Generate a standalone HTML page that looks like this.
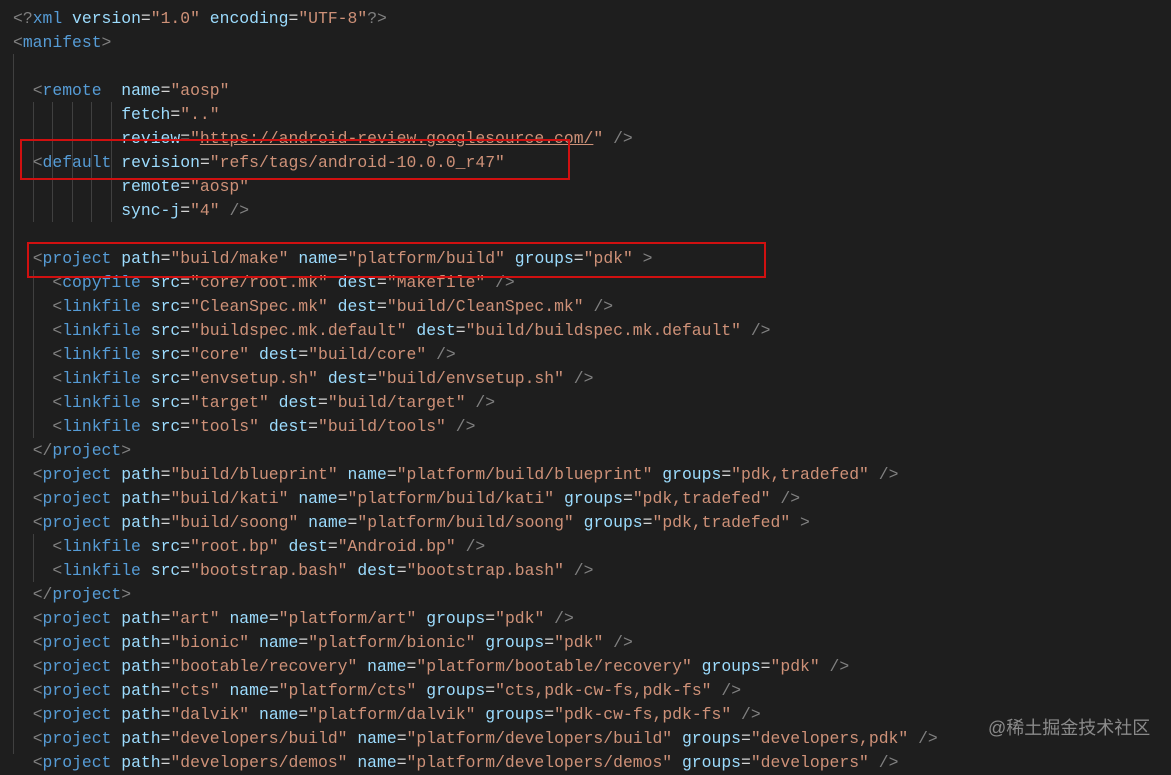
<!DOCTYPE html>
<html><head><meta charset="utf-8"><style>
html,body{margin:0;padding:0;background:#1e1e1e;width:1171px;height:759px;overflow:hidden}
#c{position:absolute;left:13px;top:7px;font-family:"Liberation Mono",monospace;font-size:16.4px;line-height:24px;color:#d4d4d4;white-space:pre}
.t{color:#569cd6}.b{color:#808080}.a{color:#9cdcfe}.s{color:#ce9178}.u{text-decoration:underline}
.g{position:absolute;width:1px;background:#404040}
.r{position:absolute;border:2px solid #d01010}
#w{position:absolute;left:988px;top:714px;font-family:"Liberation Sans","Noto Sans CJK SC",sans-serif;font-size:18px;color:#8a8a8a}
</style></head><body>
<div class="g" style="left:13px;top:54px;height:700px"></div>
<div class="g" style="left:33px;top:102px;height:120px"></div>
<div class="g" style="left:52px;top:102px;height:120px"></div>
<div class="g" style="left:72px;top:102px;height:120px"></div>
<div class="g" style="left:91px;top:102px;height:120px"></div>
<div class="g" style="left:111px;top:102px;height:120px"></div>
<div class="g" style="left:33px;top:270px;height:168px"></div>
<div class="g" style="left:33px;top:534px;height:48px"></div>
<div id="c"><span class="b">&lt;?</span><span class="t">xml</span> <span class="a">version</span>=<span class="s">"1.0"</span> <span class="a">encoding</span>=<span class="s">"UTF-8"</span><span class="b">?&gt;</span>
<span class="b">&lt;</span><span class="t">manifest</span><span class="b">&gt;</span>

  <span class="b">&lt;</span><span class="t">remote</span>  <span class="a">name</span>=<span class="s">"aosp"</span>
           <span class="a">fetch</span>=<span class="s">".."</span>
           <span class="a">review</span>=<span class="s">"<span class="u">https://android-review.googlesource.com/</span>"</span> <span class="b">/&gt;</span>
  <span class="b">&lt;</span><span class="t">default</span> <span class="a">revision</span>=<span class="s">"refs/tags/android-10.0.0_r47"</span>
           <span class="a">remote</span>=<span class="s">"aosp"</span>
           <span class="a">sync-j</span>=<span class="s">"4"</span> <span class="b">/&gt;</span>

  <span class="b">&lt;</span><span class="t">project</span> <span class="a">path</span>=<span class="s">"build/make"</span> <span class="a">name</span>=<span class="s">"platform/build"</span> <span class="a">groups</span>=<span class="s">"pdk"</span> <span class="b">&gt;</span>
    <span class="b">&lt;</span><span class="t">copyfile</span> <span class="a">src</span>=<span class="s">"core/root.mk"</span> <span class="a">dest</span>=<span class="s">"Makefile"</span> <span class="b">/&gt;</span>
    <span class="b">&lt;</span><span class="t">linkfile</span> <span class="a">src</span>=<span class="s">"CleanSpec.mk"</span> <span class="a">dest</span>=<span class="s">"build/CleanSpec.mk"</span> <span class="b">/&gt;</span>
    <span class="b">&lt;</span><span class="t">linkfile</span> <span class="a">src</span>=<span class="s">"buildspec.mk.default"</span> <span class="a">dest</span>=<span class="s">"build/buildspec.mk.default"</span> <span class="b">/&gt;</span>
    <span class="b">&lt;</span><span class="t">linkfile</span> <span class="a">src</span>=<span class="s">"core"</span> <span class="a">dest</span>=<span class="s">"build/core"</span> <span class="b">/&gt;</span>
    <span class="b">&lt;</span><span class="t">linkfile</span> <span class="a">src</span>=<span class="s">"envsetup.sh"</span> <span class="a">dest</span>=<span class="s">"build/envsetup.sh"</span> <span class="b">/&gt;</span>
    <span class="b">&lt;</span><span class="t">linkfile</span> <span class="a">src</span>=<span class="s">"target"</span> <span class="a">dest</span>=<span class="s">"build/target"</span> <span class="b">/&gt;</span>
    <span class="b">&lt;</span><span class="t">linkfile</span> <span class="a">src</span>=<span class="s">"tools"</span> <span class="a">dest</span>=<span class="s">"build/tools"</span> <span class="b">/&gt;</span>
  <span class="b">&lt;/</span><span class="t">project</span><span class="b">&gt;</span>
  <span class="b">&lt;</span><span class="t">project</span> <span class="a">path</span>=<span class="s">"build/blueprint"</span> <span class="a">name</span>=<span class="s">"platform/build/blueprint"</span> <span class="a">groups</span>=<span class="s">"pdk,tradefed"</span> <span class="b">/&gt;</span>
  <span class="b">&lt;</span><span class="t">project</span> <span class="a">path</span>=<span class="s">"build/kati"</span> <span class="a">name</span>=<span class="s">"platform/build/kati"</span> <span class="a">groups</span>=<span class="s">"pdk,tradefed"</span> <span class="b">/&gt;</span>
  <span class="b">&lt;</span><span class="t">project</span> <span class="a">path</span>=<span class="s">"build/soong"</span> <span class="a">name</span>=<span class="s">"platform/build/soong"</span> <span class="a">groups</span>=<span class="s">"pdk,tradefed"</span> <span class="b">&gt;</span>
    <span class="b">&lt;</span><span class="t">linkfile</span> <span class="a">src</span>=<span class="s">"root.bp"</span> <span class="a">dest</span>=<span class="s">"Android.bp"</span> <span class="b">/&gt;</span>
    <span class="b">&lt;</span><span class="t">linkfile</span> <span class="a">src</span>=<span class="s">"bootstrap.bash"</span> <span class="a">dest</span>=<span class="s">"bootstrap.bash"</span> <span class="b">/&gt;</span>
  <span class="b">&lt;/</span><span class="t">project</span><span class="b">&gt;</span>
  <span class="b">&lt;</span><span class="t">project</span> <span class="a">path</span>=<span class="s">"art"</span> <span class="a">name</span>=<span class="s">"platform/art"</span> <span class="a">groups</span>=<span class="s">"pdk"</span> <span class="b">/&gt;</span>
  <span class="b">&lt;</span><span class="t">project</span> <span class="a">path</span>=<span class="s">"bionic"</span> <span class="a">name</span>=<span class="s">"platform/bionic"</span> <span class="a">groups</span>=<span class="s">"pdk"</span> <span class="b">/&gt;</span>
  <span class="b">&lt;</span><span class="t">project</span> <span class="a">path</span>=<span class="s">"bootable/recovery"</span> <span class="a">name</span>=<span class="s">"platform/bootable/recovery"</span> <span class="a">groups</span>=<span class="s">"pdk"</span> <span class="b">/&gt;</span>
  <span class="b">&lt;</span><span class="t">project</span> <span class="a">path</span>=<span class="s">"cts"</span> <span class="a">name</span>=<span class="s">"platform/cts"</span> <span class="a">groups</span>=<span class="s">"cts,pdk-cw-fs,pdk-fs"</span> <span class="b">/&gt;</span>
  <span class="b">&lt;</span><span class="t">project</span> <span class="a">path</span>=<span class="s">"dalvik"</span> <span class="a">name</span>=<span class="s">"platform/dalvik"</span> <span class="a">groups</span>=<span class="s">"pdk-cw-fs,pdk-fs"</span> <span class="b">/&gt;</span>
  <span class="b">&lt;</span><span class="t">project</span> <span class="a">path</span>=<span class="s">"developers/build"</span> <span class="a">name</span>=<span class="s">"platform/developers/build"</span> <span class="a">groups</span>=<span class="s">"developers,pdk"</span> <span class="b">/&gt;</span>
  <span class="b">&lt;</span><span class="t">project</span> <span class="a">path</span>=<span class="s">"developers/demos"</span> <span class="a">name</span>=<span class="s">"platform/developers/demos"</span> <span class="a">groups</span>=<span class="s">"developers"</span> <span class="b">/&gt;</span></div>
<div class="r" style="left:20px;top:139px;width:546px;height:37px"></div>
<div class="r" style="left:27px;top:242px;width:735px;height:32px"></div>
<div id="w">@稀土掘金技术社区</div>
</body></html>
